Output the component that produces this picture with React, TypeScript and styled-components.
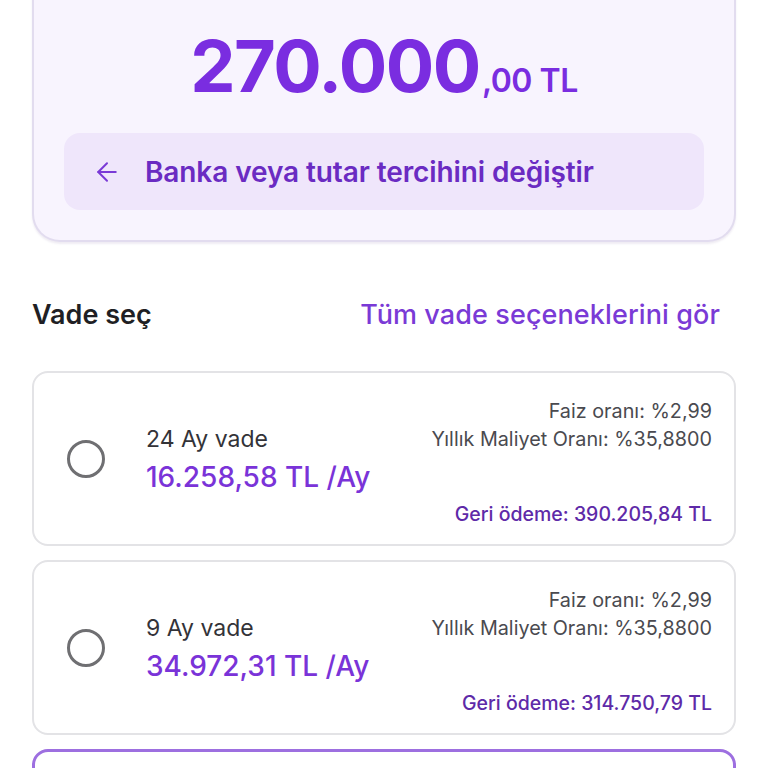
import React from "react";
import styled, { createGlobalStyle } from "styled-components";
import { ArrowLeft } from "lucide-react";

interface Term {
  months: number;
  monthly: string;
  rate: string;
  cost: string;
  total: string;
  selected?: boolean;
}

const terms: Term[] = [
  { months: 24, monthly: "16.258,58", rate: "%2,99", cost: "%35,8800", total: "390.205,84" },
  { months: 9, monthly: "34.972,31", rate: "%2,99", cost: "%35,8800", total: "314.750,79" },
  { months: 12, monthly: "27.008,42", rate: "%2,99", cost: "%35,8800", total: "324.101,04", selected: true },
];

const GlobalStyle = createGlobalStyle`
  html, body {
    margin: 0;
    padding: 0;
    background: #ffffff;
    font-family: Inter, "Noto Sans", "Liberation Sans", sans-serif;
  }
  body {
    height: 768px;
    overflow: hidden;
  }
`;

function App() {
  return (
    <>
      <GlobalStyle />
      <Page>
        <AmountCard>
          <Amount>
            270.000<Cents>,00 TL</Cents>
          </Amount>
          <ChangeButton>
            <ArrowLeft size={30} strokeWidth={1.6} />
            <span>Banka veya tutar tercihini değiştir</span>
          </ChangeButton>
        </AmountCard>

        <SectionHeader>
          <SectionTitle>Vade seç</SectionTitle>
          <SeeAll>Tüm vade seçeneklerini gör</SeeAll>
        </SectionHeader>

        <TermList>
          {terms.map((t) => (
            <TermCard key={t.months} $selected={t.selected}>
              <Radio $selected={t.selected} />
              <TermMain>
                <TermLabel>{t.months} Ay vade</TermLabel>
                <Monthly>{t.monthly} TL /Ay</Monthly>
              </TermMain>
              <TermInfo>
                <InfoLine>Faiz oranı: {t.rate}</InfoLine>
                <InfoLine>Yıllık Maliyet Oranı: {t.cost}</InfoLine>
                <Total>Geri ödeme: {t.total} TL</Total>
              </TermInfo>
            </TermCard>
          ))}
        </TermList>
      </Page>
    </>
  );
}

export default App;

const Page = styled.div`
  padding: 0 32px;
  display: flex;
  flex-direction: column;
`;

const AmountCard = styled.div`
  margin-top: -20px;
  padding: 50px 30px 30px;
  background: #f8f4fe;
  border: 2px solid #e2dcef;
  border-top: none;
  border-radius: 0 0 28px 28px;
  box-shadow: 0 2px 2px rgba(120, 100, 160, 0.12);
  display: flex;
  flex-direction: column;
  align-items: center;
  gap: 31px;
`;

const Amount = styled.div`
  font-size: 72px;
  line-height: 72px;
  font-weight: 700;
  color: #7a2de0;
  letter-spacing: -1.5px;
`;

const Cents = styled.span`
  font-size: 32px;
  line-height: 32px;
  font-weight: 600;
  letter-spacing: -0.5px;
  margin-left: 2px;
`;

const ChangeButton = styled.div`
  align-self: stretch;
  height: 77px;
  box-sizing: border-box;
  padding: 0 28px;
  border-radius: 16px;
  background: #efe6fb;
  display: flex;
  align-items: center;
  gap: 23px;
  color: #6a2bc2;
  font-size: 28px;
  font-weight: 600;
  letter-spacing: -0.1px;

  svg {
    color: #7a3ad6;
    flex-shrink: 0;
  }
`;

const SectionHeader = styled.div`
  display: flex;
  justify-content: space-between;
  align-items: center;
  margin-top: 54px;
  padding-right: 16px;
  height: 36px;
`;

const SectionTitle = styled.div`
  font-size: 27px;
  font-weight: 600;
  color: #1f1f24;
`;

const SeeAll = styled.div`
  font-size: 27px;
  font-weight: 500;
  color: #7a3ad6;
  letter-spacing: 0.1px;
`;

const TermList = styled.div`
  margin-top: 39px;
  display: flex;
  flex-direction: column;
  gap: 14px;
`;

const TermCard = styled.div<{ $selected?: boolean }>`
  height: 175px;
  box-sizing: border-box;
  border: ${(p) => (p.$selected ? "3px solid #9d6fe0" : "2px solid #e3e3e6")};
  border-radius: 16px;
  background: #ffffff;
  padding: 0 22px 0 33px;
  display: flex;
  align-items: center;
  flex-shrink: 0;
`;

const Radio = styled.div<{ $selected?: boolean }>`
  width: 38px;
  height: 38px;
  box-sizing: border-box;
  border-radius: 50%;
  border: 3px solid ${(p) => (p.$selected ? "#7a3ad6" : "#6f6f72")};
  flex-shrink: 0;
`;

const TermMain = styled.div`
  margin-left: 41px;
  display: flex;
  flex-direction: column;
  gap: 4px;
`;

const TermLabel = styled.div`
  font-size: 23px;
  line-height: 32px;
  color: #333338;
`;

const Monthly = styled.div`
  font-size: 28px;
  line-height: 36px;
  font-weight: 500;
  color: #7a33d8;
`;

const TermInfo = styled.div`
  margin-left: auto;
  display: flex;
  flex-direction: column;
  align-items: flex-end;
  align-self: stretch;
  padding: 24px 0 16px;
`;

const InfoLine = styled.div`
  font-size: 19.8px;
  line-height: 28px;
  color: #4a4a4f;
`;

const Total = styled.div`
  margin-top: auto;
  font-size: 19.5px;
  line-height: 28px;
  font-weight: 500;
  color: #5e2aa8;
`;
